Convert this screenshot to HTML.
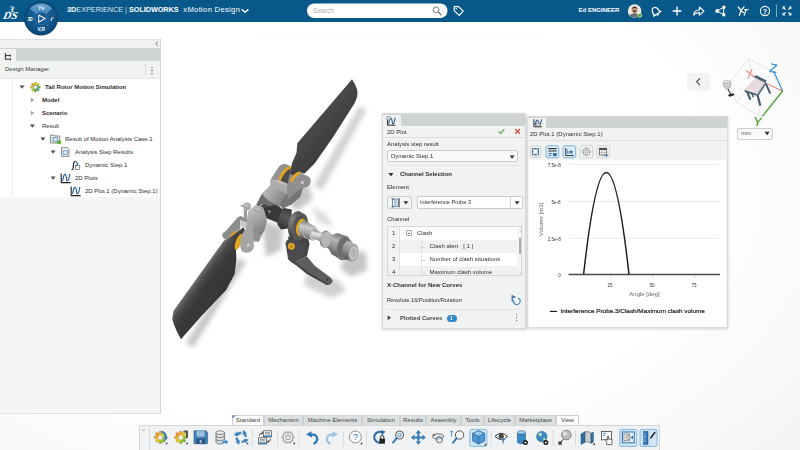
<!DOCTYPE html>
<html lang="en">
<head>
<meta charset="utf-8">
<title>3DEXPERIENCE | SOLIDWORKS xMotion Design</title>
<style>
html,body{margin:0;padding:0;}
body{width:800px;height:450px;overflow:hidden;position:relative;background:#fff;font-family:"Liberation Sans",Arial,sans-serif;font-size:7px;color:#3d3d3d;}
.abs{position:absolute;}
.t{position:absolute;white-space:nowrap;line-height:9px;height:9px;margin-top:-.7px;color:#2e2e2e;}
.b{font-weight:bold;}
#lp .t{margin-top:.9px;}
#bg{left:0;top:0;width:800px;height:450px;background:radial-gradient(ellipse 75% 85% at 42% 42%,#ffffff 0%,#ffffff 62%,#f4f5f6 100%);}
#topbar{left:0;top:0;width:800px;height:21.5px;background:#085889;}
#topbar .t{color:#fff;}
/* left panel */
#lp{left:0;top:38.500px;width:160px;height:374px;background:#f4f5f5;border-right:1px solid #d4d6d8;border-bottom:1px solid #dcdee0;}
#lp .hd{left:0;top:0;width:160px;height:9px;background:#f1f2f2;border-top:1px solid #dfe1e2;}
#lp .tabs{left:0;top:9px;width:160px;height:13px;background:#d2d5d6;}
#lp .tab{left:0;top:10px;width:16px;height:12px;background:#f1f2f2;}
#lp .title{left:0;top:22px;width:160px;height:17.500px;background:#f1f2f2;border-bottom:1px solid #e3e5e6;}
#lp .tree{left:0;top:40px;width:160px;height:118px;background:#fff;}
.arr-d{position:absolute;width:0;height:0;border-left:2.5px solid transparent;border-right:2.5px solid transparent;border-top:3.5px solid #4a4a4a;}
.arr-r{position:absolute;width:0;height:0;border-top:2.5px solid transparent;border-bottom:2.5px solid transparent;border-left:3.5px solid #9a9a9a;}
/* dialogs */
.dlg{background:#f1f2f2;border:1px solid #d9dbdc;box-shadow:0 1px 3px rgba(0,0,0,.18);}
.dtabs{left:0;top:0;height:12px;background:#ced2d3;}
.dtab{background:#f1f2f2;}
.sel{position:absolute;background:#fafafa;border:1px solid #c9cccd;border-radius:2px;box-sizing:border-box;}
.hr{position:absolute;height:1px;background:#e3e5e6;}
/* bottom */
#btabs .tb{position:absolute;top:0;height:10.6px;background:#dde0e1;border:1px solid #cdd0d1;border-bottom:none;box-sizing:border-box;text-align:center;line-height:9.6px;font-size:6px;color:#444;}
#btabs .tb.on{background:#fafafa;}
#tbar{left:139px;top:425.4px;width:521px;height:25px;background:#f1f2f3;border:1px solid #d4d6d8;border-bottom:none;box-sizing:border-box;}
</style>
</head>
<body>
<div id="bg" class="abs"></div>

<!-- ===== MODEL ===== -->
<svg id="model" class="abs" style="left:0;top:0" width="800" height="450" viewBox="0 0 800 450">
<defs>
  <filter id="blur6" x="-30%" y="-30%" width="160%" height="160%"><feGaussianBlur stdDeviation="5"/></filter>
  <filter id="blur3" x="-30%" y="-30%" width="160%" height="160%"><feGaussianBlur stdDeviation="2.5"/></filter>
  <filter id="soft" x="-5%" y="-5%" width="110%" height="110%"><feGaussianBlur stdDeviation=".5"/></filter>
  <linearGradient id="bladeU" x1="300" y1="110" x2="335" y2="140" gradientUnits="userSpaceOnUse"><stop offset="0" stop-color="#5e5e5e"/><stop offset=".25" stop-color="#4c4c4c"/><stop offset="1" stop-color="#3d3d3d"/></linearGradient>
  <linearGradient id="bladeL" x1="194" y1="282" x2="226" y2="305" gradientUnits="userSpaceOnUse"><stop offset="0" stop-color="#707070"/><stop offset=".14" stop-color="#4a4a4a"/><stop offset=".3" stop-color="#3a3a3a"/><stop offset="1" stop-color="#333"/></linearGradient>
  <linearGradient id="cylU" x1="266" y1="186" x2="284" y2="198" gradientUnits="userSpaceOnUse"><stop offset="0" stop-color="#bcbcbc"/><stop offset=".5" stop-color="#a4a4a4"/><stop offset="1" stop-color="#868686"/></linearGradient>
  <linearGradient id="cylL" x1="250" y1="210" x2="264" y2="232" gradientUnits="userSpaceOnUse"><stop offset="0" stop-color="#bdbdbd"/><stop offset=".5" stop-color="#a2a2a2"/><stop offset="1" stop-color="#7c7c7c"/></linearGradient>
  <linearGradient id="shaft" x1="320" y1="231" x2="316" y2="241" gradientUnits="userSpaceOnUse"><stop offset="0" stop-color="#9a9a9a"/><stop offset=".3" stop-color="#dedede"/><stop offset="1" stop-color="#7f7f7f"/></linearGradient>
  <linearGradient id="collar" x1="311" y1="225" x2="306" y2="240" gradientUnits="userSpaceOnUse"><stop offset="0" stop-color="#8a8a8a"/><stop offset=".35" stop-color="#c4c4c4"/><stop offset="1" stop-color="#777"/></linearGradient>
  <linearGradient id="hous" x1="350" y1="240" x2="341" y2="261" gradientUnits="userSpaceOnUse"><stop offset="0" stop-color="#7f7f7f"/><stop offset=".35" stop-color="#a4a4a4"/><stop offset="1" stop-color="#5c5c5c"/></linearGradient>
  <linearGradient id="hubc" x1="288" y1="209" x2="280" y2="228" gradientUnits="userSpaceOnUse"><stop offset="0" stop-color="#3c3c3c"/><stop offset=".4" stop-color="#5a5a5a"/><stop offset="1" stop-color="#333"/></linearGradient>
</defs>
<!-- shadows -->
<g opacity=".52" filter="url(#blur3)" fill="#909090">
  <path d="M366.500 109.500 L359.500 106 L314 185.500 L322 190.500 Z" opacity=".8"/>
  <path d="M288 187 L308 184 L313 199 L297 211 L286 201 Z"/>
  <path d="M312 206 L326 214 L334 228 L318 222 Z" opacity=".6"/>
  <path d="M262 220 L283 228 L281 250 L266 257 Z"/>
  <path d="M348 250 L366 252 L367 270 L351 277 L340 268 Z"/>
  <path d="M306 273 L338 280 L346 291 L331 298 L304 285 Z" opacity=".8"/>
  <path d="M246 262 L239 258 L186 343 L193 348 Z"/>
</g>
<g filter="url(#soft)">
<!-- upper blade -->
<path d="M352 79.300 Q356.800 86.500 357.500 92 Q357.800 97.500 355 102.500 L333.300 136.700 L315 163 L304.300 173.700 L299 172 L293.700 180.300 L287.700 181.700 L290 172.300 L292 163.300 L296.500 152.700 L297.300 143.300 Z" fill="url(#bladeU)"/>
<!-- lower blade -->
<path d="M241.700 228.700 L232.300 234.900 L223.700 241.100 L173.600 310.800 L172.300 318.500 Q173.500 326 181 339.200 L201.700 315.700 L226.100 290 L234.700 274.100 L236.400 259.400 L236 250 L238.500 241 L245 230 L243 227 Z" fill="url(#bladeL)"/>

<!-- LOWER GRIP -->
<path d="M247.200 218.900 L248.300 211.700 L255 205.500 L263.300 208.300 L266.700 213.300 L264.400 230.600 L258.900 241.700 L250.600 241.700 L244 236 L246.100 228.900 Z" fill="#a0a0a0"/>
<!-- back lug -->
<path d="M237.800 217.200 L240.600 216.100 L247.200 218.900 L246.700 222.800 L240 220 L240.500 229 L232.300 235.300 L227.500 239.500 A4.500 4.500 0 0 1 222.600 233.500 L226.700 230 Z" fill="#8e8e8e"/>
<path d="M229.600 235.600 Q232.500 232.600 236 230.800 L236.800 232.200 Q233.400 234 230.800 236.800 Z" fill="#dfa31d"/>
<!-- slot inner face -->
<path d="M240 220 L246.700 222.800 L246.100 228.900 L240.600 226.100 Z" fill="#c9c9c9"/>
<!-- body -->
<path d="M247.200 218.900 L248.300 211.700 L255 205.500 L263.300 208.300 L266.700 213.300 L266.700 221.700 L264.400 230.600 L258.900 236.100 L258.900 241.700 L253.300 238.300 L246.700 222.800 Z" fill="url(#cylL)"/>
<path d="M253.300 225.600 L258.900 228 L258.900 241.700 L253.300 238.300 Z" fill="#8f8f8f"/>
<!-- front lug -->
<ellipse cx="238.600" cy="242" rx="2.900" ry="8.400" transform="rotate(20 238.600 242)" fill="#e3a61e"/>
<path d="M246.700 222.800 L253.300 225.600 L253.300 238.300 L252.200 240.500 A7 7 0 0 1 241.200 250.400 Q238.400 243 242.500 233.600 L246.100 228.900 Z" fill="#a5a5a5"/>
<circle cx="248.300" cy="245" r="1.600" fill="#cfcfcf"/>
<!-- flybar balls -->
<path d="M243.800 210 h3.200 v8.600 h-3.200z" fill="#9c9c9c"/>
<circle cx="247" cy="206.400" r="3.900" fill="#ababab"/>
<circle cx="246.200" cy="205.400" r="1.800" fill="#bcbcbc"/>
<path d="M240.600 205.600 l3 .6" stroke="#777" stroke-width="1"/>
<path d="M250 207.800 L256 209" stroke="#c0c0c0" stroke-width=".8"/>
<ellipse cx="258.400" cy="209.700" rx="5" ry="3.200" transform="rotate(14 258.400 209.700)" fill="#a8a8a8"/>
<ellipse cx="257.800" cy="209" rx="3" ry="1.600" transform="rotate(14 257.800 209)" fill="#bdbdbd"/>
<!-- HUB -->
<path d="M262 193.700 L256 205 L258.700 206.500 L264 203 L273.300 208 L281 208 L277 202 Z" fill="#6c6c6c"/><path d="M264 203 L273.300 208 L266 209 L260 206.500 Z" fill="#4a4a4a"/>

<path d="M263.300 207.700 L274.700 205 L284 209.700 L280 223.700 L266.700 218.300 Z" fill="#393939"/>
<circle cx="269.400" cy="211.600" r="1.300" fill="#8c8c8c"/>
<path d="M282.700 207.700 L291.700 209.500 L291.700 228 L281 229.500 L277 224 Z" fill="url(#hubc)"/>

<!-- UPPER GRIP -->
<path d="M270.700 179.700 L277 169.700 L283.700 164.200 L290 166.300 L289 174 L295 175 L299 172.300 L304.300 175 L308 182 L303.500 186 L300 197 L291 204.500 L283 208.500 L279.500 205 L262 193.700 L270.700 185 Z" fill="#8c8c8c"/>
<!-- back lug -->
<path d="M270.700 179.700 L277 169.700 Q279 165 283.700 164.100 Q287.500 163.800 289.900 166.300 L286 172 L279 180.500 Z" fill="#929292"/>
<path d="M290.300 165.800 Q282 168.500 278.200 180 L280.800 181.200 Q284.800 171.500 291.400 168.600 Z" fill="#e2a51d"/>
<path d="M291 168.300 Q284.500 171 280.500 181 L287.700 183.700 L290 172.300 Z" fill="#4c4c4c"/>
<!-- box front + cylinder -->
<path d="M270.700 179.700 L287 186.300 L287 195 L279.500 205 Q268 203 262 193.700 L270.700 185 Z" fill="url(#cylU)"/>
<path d="M270.700 179.700 L287 186.300 L287 194.200 L270.700 185.400 Z" fill="#acacac"/><path d="M270.700 179.700 L278.700 180.100 L287.700 183.700 L287 186.300 Z" fill="#bdbdbd"/>

<!-- right lower dark -->
<path d="M287 193.700 L299 189.700 L303.500 186 L300 197 L291 204.500 L283 208.500 L279.500 205 Z" fill="#747474"/>
<!-- front lug -->
<path d="M287 186.300 L295 175 L299 172.300 L304.300 175 A5.800 5.800 0 0 1 304.800 187.500 L299 189.700 L288.300 199 L287 193.700 Z" fill="#8f8f8f"/>
<path d="M299.400 171.200 Q292.500 173.500 289.800 181.500 L292.500 182.600 Q294.800 176.400 300.900 173.800 Z" fill="#e2a51d"/>
<circle cx="302.300" cy="182.400" r="1.700" fill="#c8c8c8"/>
<circle cx="295.700" cy="183.600" r="1" fill="#a59a88"/>

<!-- LEVER -->
<path d="M287.500 236.500 L308 238 L309.500 244 L307 256 L303 258 L292 246 Z" fill="#434343"/>
<path d="M290.700 261.700 L296 265 L306.700 273.700 L326.700 285 L330.700 284.300 L332.900 281 L330.700 277.700 L314.700 265.700 L306.700 256.300 L304 257.700 L294.700 263 Z" fill="#5d5d5d"/>
<path d="M288 259 L290.700 261.700 L296 265 L306.700 273.700 L326.700 285 L329.500 284.800 L306.500 271 L296 262.600 L291.500 258.500 Z" fill="#444"/>
<path d="M286 246.300 A5.400 5.400 0 0 1 296 241.700 L306.700 243 L304 257.700 L294.700 263 L288 259 Z" fill="#4b4c4f"/>
<circle cx="291.300" cy="246.300" r="3.400" fill="#e6a81e"/>
<circle cx="291.300" cy="246.300" r="1.400" fill="#b07c14"/>
<circle cx="327.400" cy="279.700" r=".9" fill="#2a2a2a"/>
<defs><linearGradient id="gSl" x1="301.7" y1="212.8" x2="296.3" y2="240.2" gradientUnits="userSpaceOnUse"><stop offset="0" stop-color="#555"/><stop offset="0.3" stop-color="#828282"/><stop offset="0.6" stop-color="#676767"/><stop offset="1" stop-color="#3c3c3c"/></linearGradient><linearGradient id="gCo" x1="309.5" y1="223.0" x2="306.5" y2="238.7" gradientUnits="userSpaceOnUse"><stop offset="0" stop-color="#8c8c8c"/><stop offset="0.3" stop-color="#cfcfcf"/><stop offset="0.6" stop-color="#a8a8a8"/><stop offset="1" stop-color="#6e6e6e"/></linearGradient><linearGradient id="gSh" x1="319.7" y1="231.5" x2="317.9" y2="240.7" gradientUnits="userSpaceOnUse"><stop offset="0" stop-color="#a0a0a0"/><stop offset="0.3" stop-color="#e8e8e8"/><stop offset="0.6" stop-color="#c8c8c8"/><stop offset="1" stop-color="#808080"/></linearGradient><linearGradient id="gPu" x1="330.3" y1="232.5" x2="327.1" y2="249.2" gradientUnits="userSpaceOnUse"><stop offset="0" stop-color="#808080"/><stop offset="0.3" stop-color="#bfbfbf"/><stop offset="0.6" stop-color="#9c9c9c"/><stop offset="1" stop-color="#626262"/></linearGradient><linearGradient id="gHo" x1="341.8" y1="234.3" x2="337.2" y2="257.9" gradientUnits="userSpaceOnUse"><stop offset="0" stop-color="#727272"/><stop offset="0.28" stop-color="#b4b4b4"/><stop offset="0.6" stop-color="#909090"/><stop offset="1" stop-color="#525252"/></linearGradient></defs>
<!-- SLIDER -->
<ellipse cx="295.9" cy="225.0" rx="7.8" ry="14.0" transform="rotate(11.0 295.9 225.0)" fill="url(#gSl)"/>
<path d="M298.6 211.3 L302.8 213.3 L297.4 240.8 L293.3 238.8 Z" fill="url(#gSl)"/>
<ellipse cx="300.1" cy="227.0" rx="7.8" ry="14.0" transform="rotate(11.0 300.1 227.0)" fill="#5e5e5e"/>
<ellipse cx="300.2" cy="227.1" rx="6.7" ry="12.0" transform="rotate(11.0 300.2 227.1)" fill="#545454"/>
<ellipse cx="301.2" cy="227.5" rx="5.0" ry="8.9" transform="rotate(11.0 301.2 227.5)" fill="#e6a81e"/>
<ellipse cx="301.9" cy="227.9" rx="3.6" ry="6.4" transform="rotate(11.0 301.9 227.9)" fill="#8c8c8c"/>
<!-- collar + shaft -->
<ellipse cx="303.1" cy="228.5" rx="4.5" ry="8.0" transform="rotate(11.0 303.1 228.5)" fill="url(#gCo)"/>
<path d="M304.6 220.6 L309.5 223.0 L306.5 238.7 L301.5 236.3 Z" fill="url(#gCo)"/>
<ellipse cx="308.0" cy="230.9" rx="4.5" ry="8.0" transform="rotate(11.0 308.0 230.9)" fill="#b9b9b9"/>
<ellipse cx="308.0" cy="230.9" rx="4.0" ry="7.2" transform="rotate(11.0 308.0 230.9)" fill="url(#gCo)"/>
<path d="M309.4 223.8 L315.2 226.6 L312.5 240.7 L306.6 237.9 Z" fill="url(#gCo)"/>
<ellipse cx="313.9" cy="233.7" rx="4.0" ry="7.2" transform="rotate(11.0 313.9 233.7)" fill="#c3c3c3"/>
<ellipse cx="313.9" cy="233.7" rx="2.5" ry="4.5" transform="rotate(11.0 313.9 233.7)" fill="url(#gSh)"/>
<path d="M314.7 229.3 L326.9 235.1 L325.2 244.0 L313.0 238.1 Z" fill="url(#gSh)"/>
<ellipse cx="326.0" cy="239.6" rx="2.5" ry="4.5" transform="rotate(11.0 326.0 239.6)" fill="url(#gSh)"/>
<!-- pulley -->
<ellipse cx="333.2" cy="243.0" rx="4.9" ry="8.8" transform="rotate(11.0 333.2 243.0)" fill="url(#gPu)"/>
<path d="M334.9 234.4 L336.5 235.2 L333.2 252.5 L331.5 251.7 Z" fill="url(#gPu)"/>
<ellipse cx="334.8" cy="243.8" rx="4.9" ry="8.8" transform="rotate(11.0 334.8 243.8)" fill="#9a9a9a"/>
<ellipse cx="326.5" cy="239.8" rx="4.1" ry="7.3" transform="rotate(11.0 326.5 239.8)" fill="url(#gPu)"/>
<path d="M327.9 232.6 L335.1 236.1 L332.3 250.4 L325.1 246.9 Z" fill="url(#gPu)"/>
<ellipse cx="333.7" cy="243.3" rx="4.1" ry="7.3" transform="rotate(11.0 333.7 243.3)" fill="#8a8a8a"/>
<path d="M326.4 245.3 L332.2 248.1" stroke="#6a6a6a" stroke-width=".7"/>
<path d="M326.9 242.8 L332.7 245.6" stroke="#6a6a6a" stroke-width=".7"/>
<path d="M327.4 240.2 L333.2 243.0" stroke="#6a6a6a" stroke-width=".7"/>
<path d="M327.9 237.7 L333.7 240.5" stroke="#6a6a6a" stroke-width=".7"/>
<path d="M328.4 235.1 L334.2 237.9" stroke="#6a6a6a" stroke-width=".7"/>
<ellipse cx="324.7" cy="238.9" rx="4.8" ry="8.5" transform="rotate(11.0 324.7 238.9)" fill="url(#gPu)"/>
<path d="M326.4 230.6 L328.0 231.4 L324.7 248.1 L323.1 247.3 Z" fill="url(#gPu)"/>
<ellipse cx="326.4" cy="239.7" rx="4.8" ry="8.5" transform="rotate(11.0 326.4 239.7)" fill="#b6b6b6"/>
<!-- housing -->
<ellipse cx="335.9" cy="244.3" rx="6.3" ry="11.2" transform="rotate(11.0 335.9 244.3)" fill="url(#gHo)"/>
<path d="M338.1 233.4 L345.9 235.9 L341.2 260.2 L333.8 255.3 Z" fill="url(#gHo)"/>
<ellipse cx="343.6" cy="248.0" rx="6.9" ry="12.4" transform="rotate(11.0 343.6 248.0)" fill="#7c7c7c"/>
<ellipse cx="343.6" cy="248.0" rx="5.8" ry="10.4" transform="rotate(11.0 343.6 248.0)" fill="#6a6a6a"/>
<path d="M345.6 237.8 L349.2 239.6 L345.2 260.0 L341.6 258.3 Z" fill="#6a6a6a"/>
<ellipse cx="347.2" cy="249.8" rx="5.8" ry="10.4" transform="rotate(11.0 347.2 249.8)" fill="#777"/>
<ellipse cx="347.2" cy="249.8" rx="5.0" ry="8.9" transform="rotate(11.0 347.2 249.8)" fill="url(#gHo)"/>
<path d="M348.9 241.0 L355.1 244.1 L351.7 261.5 L345.5 258.5 Z" fill="url(#gHo)"/>
<ellipse cx="353.4" cy="252.8" rx="5.0" ry="8.9" transform="rotate(11.0 353.4 252.8)" fill="#a6a6a6"/>
<ellipse cx="353.6" cy="252.9" rx="3.7" ry="6.6" transform="rotate(11.0 353.6 252.9)" fill="#cbcbcb"/>
<ellipse cx="353.6" cy="252.9" rx="2.7" ry="4.8" transform="rotate(11.0 353.6 252.9)" fill="#b2b2b2"/>
</g>
</svg>

<div class="abs" style="left:260px;top:37.800px;width:280px;height:1.500px;background:#f8f8f8"></div>
<!-- ===== TOP BAR ===== -->
<div id="topbar" class="abs">
<svg class="abs" style="left:0;top:0;overflow:visible" width="800" height="40" viewBox="0 0 800 40">
  <defs>
    <radialGradient id="cg" cx="50%" cy="40%" r="60%"><stop offset="0" stop-color="#1f6ba3"/><stop offset="1" stop-color="#0b4a7a"/></radialGradient>
    <linearGradient id="cq" x1="0" y1="0" x2="0" y2="1"><stop offset="0" stop-color="#6aa6d0"/><stop offset="1" stop-color="#3a80b4"/></linearGradient>
  </defs>
  <!-- compass -->
  <circle cx="41" cy="18.500" r="17" fill="#0a4573"/>
  <circle cx="41" cy="18.500" r="15.600" fill="url(#cg)"/>
  <path d="M29.800 8.400 A15.200 15.200 0 0 1 52.200 8.400 L45.200 14.800 A6 6 0 0 0 36.800 14.800 Z" fill="url(#cq)"/>
  <path d="M33 10.500 L36 13.500 M49 10.500 L46 13.500 M33 26.500 L35.600 24 M49 26.500 L46.400 24" stroke="#4b94c8" stroke-width=".5" fill="none"/>
  <circle cx="41" cy="18.500" r="6.200" fill="#14598f" stroke="#2b78b2" stroke-width=".7"/>
  <path d="M38.700 15 L45.200 18.600 L38.700 22.200 Z" fill="none" stroke="#e9f1f7" stroke-width="1.100" stroke-linejoin="round"/>
  <text x="41.200" y="10.400" font-size="5.200" font-weight="bold" font-style="italic" fill="#fff" text-anchor="middle">Ys</text>
  <text x="30.200" y="20.500" font-size="4.800" font-weight="bold" fill="#fff" text-anchor="middle" textLength="5" lengthAdjust="spacingAndGlyphs">3D</text>
  <text x="52" y="20.700" font-size="5.600" font-weight="bold" font-style="italic" fill="#fff" text-anchor="middle">i'</text>
  <text x="41.200" y="30.800" font-size="4.800" font-weight="bold" fill="#fff" text-anchor="middle" textLength="7.500" lengthAdjust="spacingAndGlyphs">V,R</text>
  <!-- 3DS logo -->
  <g font-family="Liberation Serif, serif" font-weight="bold" font-style="italic" fill="#fff">
    <text x="9.400" y="12.600" font-size="9.500" transform="rotate(8 12 8)">3</text>
    <text x="3" y="18.900" font-size="10.500" textLength="14.500" lengthAdjust="spacingAndGlyphs" transform="skewX(-12) translate(3.500 0)">DS</text>
  </g>
  <!-- search -->
  <rect x="307" y="3.5" width="140.5" height="14.5" rx="7.2" fill="#fff"/>
  <text x="313" y="13.2" font-size="6.6" fill="#a9b0b5">Search</text>
  <circle cx="436.2" cy="9.8" r="2.9" fill="none" stroke="#6b747a" stroke-width=".9"/>
  <path d="M438.3 12 L441.2 15" stroke="#6b747a" stroke-width="1.1" stroke-linecap="round"/>
  <!-- tag -->
  <path d="M454.2 6.6 L458.6 6.6 L463.2 11.2 L459.2 15.4 L454.2 10.6 Z" fill="none" stroke="#fff" stroke-width="1.2" stroke-linejoin="round"/>
  <circle cx="456.3" cy="8.7" r=".8" fill="#fff"/>
  <!-- avatar -->
  <circle cx="634.600" cy="11" r="6.800" fill="#ebe6de"/>
  <circle cx="634.600" cy="9.600" r="3" fill="#c79a7a"/>
  <path d="M631.400 9 Q634.600 4 637.800 9 Q634.600 7.200 631.400 9Z" fill="#3b2a20"/>
  <path d="M632.600 11.400 Q634.600 13.600 636.600 11.400 L636.200 10.400 H633z" fill="#4a362a"/>
  <path d="M629.200 15.400 Q634.600 10.400 640 15.400 Q634.600 19.400 629.200 15.400Z" fill="#6d7478"/>
  <circle cx="639.800" cy="15.400" r="2" fill="#57a83a" stroke="#fff" stroke-width=".5"/>
  <!-- bell/notify -->
  <g transform="translate(655.400 10.800) rotate(-32)" fill="none" stroke="#fff" stroke-width="1.200" stroke-linejoin="round">
    <path d="M-3.300 2.400 Q-3.400 -3.600 0 -3.600 Q3.400 -3.600 3.300 2.400 L4.300 3.600 H-4.300 Z"/>
    <path d="M-1 4.400 Q0 5.600 1 4.400" stroke-width="1"/>
  </g>
  <!-- plus -->
  <path d="M677 6.6 V15.4 M672.6 11 H681.4" stroke="#fff" stroke-width="1.3"/>
  <!-- share arrow -->
  <path d="M693.6 15.2 Q694 10.2 699.4 10 L699.4 7 L704 11.2 L699.4 15.2 L699.4 12.6 Q696 12.4 693.6 15.2Z" fill="none" stroke="#fff" stroke-width="1.1" stroke-linejoin="round"/>
  <!-- network share -->
  <path d="M717.2 11 L723.6 7.2 M717.2 11 L723.6 14.8 M723.6 7.2 L723.6 14.8" stroke="#fff" stroke-width="1"/>
  <circle cx="717.2" cy="11" r="1.9" fill="#fff"/><circle cx="723.8" cy="7.2" r="1.7" fill="#fff"/><circle cx="723.8" cy="14.8" r="1.7" fill="#fff"/>
  <!-- collab -->
  <path d="M738.2 7 L741 10.4 L744 7 M741 10.4 L739.4 15.4 M741 11 L743.4 12.6" stroke="#fff" stroke-width="1.2" fill="none" stroke-linecap="round"/>
  <path d="M744.6 9.6 L748 9.6 M744.2 15.2 L746 10 " stroke="#fff" stroke-width="1.1" fill="none" stroke-linecap="round"/>
  <!-- help -->
  <circle cx="765" cy="11" r="4.6" fill="none" stroke="#fff" stroke-width="1.1"/>
  <text x="765" y="13.6" font-size="7" font-weight="bold" fill="#fff" text-anchor="middle">?</text>
  <!-- sep -->
  <path d="M776.5 4.5 V17" stroke="#9fc0d6" stroke-width=".8"/>
  <!-- expand -->
  <path d="M782.6 6.6 h2.8 l-1 1 l1.6 1.6 l-.8 .8 l-1.6 -1.6 l-1 1z M791.4 6.6 v2.8 l-1 -1 l-1.6 1.6 l-.8 -.8 l1.6 -1.6 l-1 -1z M782.6 15.4 v-2.8 l1 1 l1.6 -1.6 l.8 .8 l-1.6 1.6 l1 1z M791.4 15.4 h-2.8 l1 -1 l-1.6 -1.6 l.8 -.8 l1.6 1.6 l1 -1z" fill="#fff"/>
  <!-- chevron -->
  <path d="M241.6 9.4 L245 12.2 L248.4 9.4" stroke="#fff" stroke-width="1.4" fill="none"/>
</svg>
<div class="t" style="left:67px;top:6px;font-size:7.3px;"><span class="b">3D</span><span style="letter-spacing:-.03px;color:#dce9f2">EXPERIENCE</span><span style="color:#cfe0ec"> | </span><span class="b" style="letter-spacing:-.08px">SOLIDWORKS</span><span style="font-size:7.6px;letter-spacing:.32px">&nbsp; xMotion Design</span></div>
<div class="t b" style="left:578.500px;top:6.600px;font-size:6.050px;">Ed ENGINEER</div>

</div>

<!-- ===== LEFT PANEL ===== -->
<div id="lp" class="abs">
<div class="abs hd"></div>
<div class="abs tabs"></div>
<div class="abs tab"></div>
<div class="abs title"></div>
<div class="abs tree"></div>
<svg class="abs" style="left:0;top:0;overflow:visible" width="160" height="160" viewBox="0 39 160 160">
  <defs><linearGradient id="rain2" x1="0" y1="0" x2="1" y2="1"><stop offset="0" stop-color="#e2412c"/><stop offset=".25" stop-color="#f0a61c"/><stop offset=".42" stop-color="#e8d820"/><stop offset=".62" stop-color="#5fbf3a"/><stop offset="1" stop-color="#2f7fd0"/></linearGradient></defs>
  <!-- collapse chevron -->
  <path d="M157.800 41.400 L155.800 43.600 L157.800 45.800" stroke="#6d7174" stroke-width="1" fill="none"/>
  <!-- tree tab icon -->
  <path d="M5.4 53 V59.6 M5.4 55.6 H10.4 M5.4 59.2 H10.4 M10.4 54.6 V56.6 M10.4 58.2 V60.2" stroke="#2f2f2f" stroke-width="1" fill="none"/>
  <!-- title sep and dots -->
  <path d="M145.600 64 V75.500" stroke="#dcdedf" stroke-width="1"/>
  <circle cx="152" cy="67.800" r=".75" fill="#666"/><circle cx="152" cy="70.800" r=".75" fill="#666"/><circle cx="152" cy="73.800" r=".75" fill="#666"/>
  <!-- guide line -->
  <path d="M12.5 79 V197" stroke="#ededed" stroke-width="1"/>
  <!-- arrows -->
  <g fill="#4d4d4d">
    <path d="M19.6 85.4 h5 l-2.5 3.4z"/>
    <path d="M29.8 124.4 h5 l-2.5 3.4z"/>
    <path d="M40.4 137.4 h5 l-2.5 3.4z"/>
    <path d="M50.6 150.4 h5 l-2.5 3.4z"/>
    <path d="M50.6 176.4 h5 l-2.5 3.4z"/>
  </g>
  <g fill="#a4a7a9">
    <path d="M30.8 97.6 v5 l3.4 -2.5z"/>
    <path d="M30.8 110.6 v5 l3.4 -2.5z"/>
  </g>
  <!-- gear icon (root) -->
  <g transform="translate(35.400 87.200) scale(.8)">
    <path d="M4.45 -1.18 L6.12 -1.02 L6.12 1.02 L4.45 1.18 L3.98 2.31 L5.04 3.60 L3.60 5.04 L2.31 3.98 L1.18 4.45 L1.02 6.12 L-1.02 6.12 L-1.18 4.45 L-2.31 3.98 L-3.60 5.04 L-5.04 3.60 L-3.98 2.31 L-4.45 1.18 L-6.12 1.02 L-6.12 -1.02 L-4.45 -1.18 L-3.98 -2.31 L-5.04 -3.60 L-3.60 -5.04 L-2.31 -3.98 L-1.18 -4.45 L-1.02 -6.12 L1.02 -6.12 L1.18 -4.45 L2.31 -3.98 L3.60 -5.04 L5.04 -3.60 L3.98 -2.31 Z" fill="url(#rain2)" stroke="#8a6a20" stroke-width=".35"/>
    <circle r="2.500" fill="#fff" stroke="#3c7fbd" stroke-width=".9"/>
  </g>
  <!-- result case folder icon -->
  <g>
    <path d="M50.6 135 h3 l.8 1 h5.4 v7 h-9.2z" fill="#f2f3f3" stroke="#555" stroke-width=".7"/>
    <rect x="53" y="137.6" width="4.6" height="3.6" fill="#dbe8f4" stroke="#2d6ea8" stroke-width=".6"/>
    <circle cx="59.2" cy="142.2" r="2" fill="#5cb030"/>
  </g>
  <!-- analysis step results icon -->
  <g>
    <path d="M61.6 147.6 h5.6 l1.8 1.8 v7 h-7.4z" fill="#fafafa" stroke="#555" stroke-width=".7"/>
    <rect x="63.2" y="150.8" width="4.2" height="3.6" fill="#dbe8f4" stroke="#2d6ea8" stroke-width=".6"/>
  </g>
  <!-- dynamic step icon -->
  <g>
    <path d="M71.600 169.800 Q73.400 169.800 73.400 165.600 T75.600 161" stroke="#222" stroke-width="1.200" fill="none"/>
    <path d="M75.600 161.600 L77.800 163.600 L76.400 166 L79.600 167.400" stroke="#1f5a92" stroke-width="1.100" fill="none"/>
    <rect x="75.6" y="165.4" width="4.2" height="4" fill="#e8f0f8" stroke="#555" stroke-width=".6"/>
  </g>
  <!-- 2D plots icons -->
  <g id="pl2d">
    <path d="M61.200 173.400 V182.600 H70.600" stroke="#222" stroke-width="1.100" fill="none"/>
    <path d="M62.600 181 Q63.600 174 65.100 174.400 Q66.400 174.800 66.800 181" stroke="#1f5a92" stroke-width="1.100" fill="none"/>
    <path d="M66.800 181 Q68.800 181 69.200 177 Q69.500 174 70.400 174.400" stroke="#1f5a92" stroke-width="1.100" fill="none"/>
  </g>
  <use href="#pl2d" x="10" y="13"/>
</svg>
<div class="t" style="left:5px;top:26px;font-size:6px;color:#3a3a3a">Design Manager</div>
<div class="t b" style="left:45px;top:43.5px;font-size:6px;">Tail Rotor Motion Simulation</div>
<div class="t b" style="left:42px;top:56.5px;font-size:6px;">Model</div>
<div class="t b" style="left:42px;top:69.5px;font-size:6px;">Scenario</div>
<div class="t" style="left:42px;top:82.5px;font-size:6px;">Result</div>
<div class="t" style="left:65px;top:95.5px;font-size:6px;">Result of Motion Analysis Case.1</div>
<div class="t" style="left:75px;top:108.5px;font-size:6px;">Analysis Step Results</div>
<div class="t" style="left:85px;top:121.5px;font-size:6px;">Dynamic Step.1</div>
<div class="t" style="left:75px;top:134.5px;font-size:6px;">2D Plots</div>
<div class="t" style="left:85px;top:147.5px;font-size:6px;">2D Plot.1 (Dynamic Step.1)</div>

</div>

<!-- ===== DIALOG 2D PLOT ===== -->
<div class="abs dlg" style="left:382px;top:113px;width:142px;height:214px;">
  <div class="abs dtabs" style="width:142px;height:11.800px"></div>
  <div class="abs dtab" style="left:0;top:1px;width:18px;height:10.800px;"></div>
  <div class="hr" style="left:0;top:23.300px;width:142px;background:#dcdfe0"></div>
  <div class="t" style="left:4px;top:14.5px;font-size:6px;">2D Plot</div>
  <div class="t" style="left:4px;top:26.200px;font-size:6px;">Analysis step result</div>
  <div class="sel" style="left:4px;top:36.400px;width:131px;height:11.600px;"></div>
  <div class="t" style="left:8px;top:38.600px;font-size:6px;">Dynamic Step.1</div>
  <div class="hr" style="left:4px;top:51.200px;width:134px;"></div>
  <div class="t b" style="left:17px;top:56.5px;font-size:6px;">Channel Selection</div>
  <div class="t" style="left:4px;top:70px;font-size:6px;">Element</div>
  <div class="sel" style="left:4px;top:82.400px;width:24.500px;height:12.500px;background:#f3f4f4"></div>
  <div class="sel" style="left:34px;top:82.400px;width:106px;height:12.500px;background:#fff;border-radius:1px"></div>
  <div class="abs" style="left:127px;top:83.400px;width:1px;height:10.500px;background:#cfd2d3"></div>
  <div class="t" style="left:37px;top:84.800px;font-size:5.600px;">Interference Probe.3</div>
  <div class="t" style="left:4px;top:101.200px;font-size:6px;">Channel</div>
  <!-- table -->
  <div class="abs" style="left:4px;top:112px;width:135px;height:50px;background:#fff;border:1px solid #d4d7d8;box-sizing:border-box;overflow:hidden">
    <div class="abs" style="left:0;top:13px;width:135px;height:13px;background:#f0f1f2"></div>
    <div class="abs" style="left:0;top:39px;width:135px;height:13px;background:#f0f1f2"></div>
    <div class="abs" style="left:0;top:0;width:11px;height:50px;background:rgba(240,241,242,.7);border-right:1px solid #e0e2e3"></div><div class="abs" style="left:32.500px;top:13px;width:.7px;height:37px;background:#e2e2e2"></div>
    <div class="t" style="left:4px;top:2.5px;font-size:6px;">1</div>
    <div class="t" style="left:4px;top:15.5px;font-size:6px;">2</div>
    <div class="t" style="left:4px;top:28.5px;font-size:6px;">3</div>
    <div class="t" style="left:4px;top:41.5px;font-size:6px;">4</div>
    <div class="abs" style="left:17.800px;top:3px;width:6.400px;height:6.400px;border:.6px solid #a5a8aa;border-radius:1px;background:#fff;box-sizing:border-box"></div>
    <div class="abs" style="left:19.800px;top:5.900px;width:2.400px;height:.7px;background:#666"></div>
    <div class="t" style="left:29px;top:2.5px;font-size:6px;">Clash</div>
    <div class="t" style="left:41.5px;top:15.5px;font-size:6px;">Clash alert &nbsp;&nbsp;[ 1 ]</div>
    <div class="t" style="left:41.5px;top:28.5px;font-size:6px;">Number of clash situations</div>
    <div class="t" style="left:41.5px;top:41.5px;font-size:6px;">Maximum clash volume</div>
    <div class="abs" style="left:33px;top:19.500px;width:4px;height:.6px;background:#d0d0d0"></div>
    <div class="abs" style="left:33px;top:32.500px;width:4px;height:.6px;background:#d0d0d0"></div>
    <div class="abs" style="left:33px;top:45.500px;width:4px;height:.6px;background:#d0d0d0"></div>
    <div class="abs" style="left:129px;top:0;width:5px;height:50px;background:#f5f5f5"></div>
    <div class="abs" style="left:130.5px;top:11px;width:2.6px;height:16px;background:#a9acad"></div>
  </div>
  <div class="t b" style="left:4px;top:167.5px;font-size:6px;">X-Channel for New Curves</div>
  <div class="t" style="left:4px;top:182.300px;font-size:5.700px;">Revolute.16/Position/Rotation</div>
  <div class="hr" style="left:4px;top:194.800px;width:134px;"></div>
  <div class="t b" style="left:17px;top:200.300px;font-size:6px;color:#444">Plotted Curves</div>
  <div class="abs" style="left:63.500px;top:200.700px;width:10px;height:7.400px;border-radius:4px;background:#2f87c8;"></div>
  <div class="t b" style="left:66.800px;top:200.200px;font-size:5.600px;color:#fff">1</div>
  <svg class="abs" style="left:0;top:0;overflow:visible" width="142" height="214" viewBox="382 113 142 214">
    <!-- tab icon -->
    <g transform="translate(-61.500 -47) scale(.95)">
      <path d="M471.6 172.2 V180.2 H480" stroke="#222" stroke-width="1" fill="none"/>
      <path d="M472.800 179 Q473.800 172.600 475.200 173 Q476.400 173.400 476.800 179" stroke="#1f5a92" stroke-width="1.100" fill="none"/>
      <path d="M476.800 179 Q478.600 179 479 175 Q479.300 172.600 480.200 173" stroke="#1f5a92" stroke-width="1.100" fill="none"/>
      <rect x="471" y="171.4" width="3.2" height="3.2" fill="#fff" stroke="#555" stroke-width=".6"/>
    </g>
    <!-- check and cross -->
    <path d="M497.600 130.400 L499.600 132.400 L503.400 128.200" stroke="#4caf3c" stroke-width="1.1" fill="none"/>
    <path d="M514.200 128 L518.800 132.800 M518.800 128 L514.200 132.800" stroke="#e03a2e" stroke-width="1.1" fill="none"/>
    <!-- dropdown arrows -->
    <path d="M508.600 154.600 h5 l-2.500 3.200z" fill="#333"/>
    <path d="M513.600 200.200 h5 l-2.500 3.200z" fill="#333"/>
    <path d="M402.400 200.200 h5 l-2.500 3.200z" fill="#333"/>
    <path d="M387.400 172 h5 l-2.500 3.400z" fill="#333"/>
    <path d="M386.600 314.300 v5 l3.400 -2.500z" fill="#444"/>
    <!-- element icon -->
    <g transform="translate(0 -.7)">
      <rect x="391.6" y="198.8" width="6" height="7.6" fill="#e9eff5" stroke="#44698c" stroke-width=".7"/>
      <path d="M393 200.6 h3.2 M393 202.6 h3.2 M393 204.6 h3.2" stroke="#2d6ea8" stroke-width=".6"/>
      <path d="M398.2 198 v9" stroke="#333" stroke-width=".8"/>
      <path d="M390.4 198.4 h2.4 M390.4 206.8 h2.4" stroke="#333" stroke-width=".6"/>
    </g>
    <!-- scrollbar arrows -->
    <path d="M518.6 231.4 l1.4 -1.6 l1.4 1.6" stroke="#aaa" stroke-width=".5" fill="none"/>
    <path d="M518.6 271.6 l1.4 1.6 l1.4 -1.6" stroke="#aaa" stroke-width=".5" fill="none"/>
    <!-- revolute icon -->
    <g transform="translate(-.8 -2.500)">
      <path d="M512 296.4 v6" stroke="#1e5f96" stroke-width="1.1"/>
      <path d="M513 297 l3 1.4 l-3 1.4z" fill="#1e5f96"/>
      <path d="M518 299.6 A3.4 3.4 0 1 1 513.2 302.6" stroke="#3a86c4" stroke-width="1.1" fill="none"/>
      <path d="M511.6 302.2 l2.6 -.6 l-.6 2.6z" fill="#3a86c4"/>
    </g>
    <!-- dots -->
    <circle cx="515.600" cy="313.800" r=".65" fill="#666"/><circle cx="515.600" cy="316.600" r=".65" fill="#666"/><circle cx="515.600" cy="319.400" r=".65" fill="#666"/>
  </svg>
</div>


<!-- ===== PLOT PANEL ===== -->
<div class="abs dlg" style="left:526.500px;top:116px;width:199.500px;height:210px;">
  <div class="abs dtabs" style="width:199.500px;height:11.200px"></div>
  <div class="abs dtab" style="left:0;top:1px;width:18px;height:10.200px;"></div>
  <div class="hr" style="left:0;top:22.500px;width:199.500px;background:#dcdfe0"></div>
  <div class="t" style="left:2.5px;top:14px;font-size:6px;">2D Plot.1 (Dynamic Step.1)</div>
  <div class="abs" style="left:1.500px;top:43px;width:196.500px;height:166.500px;background:#fff"></div>
  <svg class="abs" style="left:0;top:0;overflow:visible" width="199" height="210" viewBox="527.500 117 199 210">
    <!-- tab icon -->
    <g transform="translate(85.400 -44.400) scale(.95)">
      <path d="M471.6 172.2 V180.2 H480" stroke="#222" stroke-width="1" fill="none"/>
      <path d="M472.800 179 Q473.800 172.600 475.200 173 Q476.400 173.400 476.800 179" stroke="#1f5a92" stroke-width="1.100" fill="none"/>
      <path d="M476.800 179 Q478.600 179 479 175 Q479.300 172.600 480.200 173" stroke="#1f5a92" stroke-width="1.100" fill="none"/>
      <rect x="474.6" y="176.4" width="3.4" height="3" fill="#fff" stroke="#555" stroke-width=".6"/>
    </g>
    <!-- toolbar buttons -->
    <g transform="translate(-.8 0)">
      <rect x="530.4" y="146" width="10.6" height="11.4" rx="1.5" fill="#f3f4f4" stroke="#c3c6c8" stroke-width=".7"/>
      <rect x="546.4" y="145.8" width="12.6" height="12" rx="2" fill="#dfeefa" stroke="#5f9fd4" stroke-width=".8"/>
      <rect x="563.4" y="145.8" width="12.6" height="12" rx="2" fill="#dfeefa" stroke="#5f9fd4" stroke-width=".8"/>
      <rect x="580.4" y="145.8" width="12.6" height="12" rx="2" fill="#f3f4f4" stroke="#c3c6c8" stroke-width=".7"/>
      <rect x="597.2" y="145.8" width="12.6" height="12" rx="2" fill="#f3f4f4" stroke="#c3c6c8" stroke-width=".7"/>
      <!-- fit icon -->
      <rect x="532.200" y="148" width="7" height="7.400" fill="#3f6d96"/><rect x="533.600" y="149.600" width="4.200" height="4.200" rx="1.400" fill="#fff"/>
      <path d="M533 148.8 h2 l-2 2z M538.4 148.8 v2 l-2 -2z M533 154.6 v-2 l2 2z M538.4 154.6 h-2 l2 -2z" fill="#fff"/>
      <path d="M534.4 150.2 l2.6 3 M537 150.2 l-2.6 3" stroke="#fff" stroke-width=".6"/>
      <!-- legend icon -->
      <path d="M548.6 148.6 h8.4 M548.6 151 h8.4" stroke="#333" stroke-width="1.1"/>
      <path d="M548.6 153.6 h4 M548.6 155.6 h3" stroke="#2d6ea8" stroke-width=".9"/>
      <path d="M553.4 153 h3.6 v3.2 h-3.6z" fill="#2d6ea8"/>
      <!-- axis icon -->
      <path d="M566 148 V155.6 H574" stroke="#333" stroke-width="1" fill="none"/>
      <path d="M567.6 149 v5 M569.4 151 v3" stroke="#2d6ea8" stroke-width=".8"/>
      <path d="M570.4 150 l3.4 2 l-1.6 .4 l1 1.8 l-.8 .4 l-1 -1.8 l-1 1z" fill="#2d6ea8"/>
      <!-- gear -->
      <g transform="translate(586.700 151.800)"><path d="M2.80 -0.74 L3.85 -0.64 L3.85 0.64 L2.80 0.74 L2.51 1.46 L3.17 2.27 L2.27 3.17 L1.46 2.51 L0.74 2.80 L0.64 3.85 L-0.64 3.85 L-0.74 2.80 L-1.46 2.51 L-2.27 3.17 L-3.17 2.27 L-2.51 1.46 L-2.80 0.74 L-3.85 0.64 L-3.85 -0.64 L-2.80 -0.74 L-2.51 -1.46 L-3.17 -2.27 L-2.27 -3.17 L-1.46 -2.51 L-0.74 -2.80 L-0.64 -3.85 L0.64 -3.85 L0.74 -2.80 L1.46 -2.51 L2.27 -3.17 L3.17 -2.27 L2.51 -1.46 Z" fill="#fbfbfb" stroke="#666" stroke-width=".6"/><circle r="1.500" fill="none" stroke="#666" stroke-width=".6"/></g>
      <!-- table -->
      <rect x="599.6" y="148.2" width="7.4" height="6.8" fill="#fff" stroke="#444" stroke-width=".7"/>
      <rect x="599.6" y="148.2" width="7.4" height="1.8" fill="#444"/>
      <path d="M602 150 v5 M604.6 150 v5 M599.6 152.4 h7.4" stroke="#777" stroke-width=".45"/>
      <path d="M604 155.4 h3.8 M606.4 153.8 l1.6 1.6 l-1.6 1.6" stroke="#2d6ea8" stroke-width=".8" fill="none"/>
    </g>
    <!-- grid -->
    <path d="M568 164.3 H719.4 M568 201.4 H719.4 M568 238.3 H719.4" stroke="#e9e9e9" stroke-width=".9"/>
    <path d="M568 274.5 H719.6" stroke="#4a4a4a" stroke-width="1.5"/>
    <path d="M610.3 275 v3 M652.3 275 v3 M694.2 275 v3" stroke="#bdbdbd" stroke-width=".7"/>
    <path d="M583.1 274.4 Q605.8 70.6 628.5 274.4" stroke="#1c1c1c" stroke-width="1.450" fill="none" stroke-linejoin="round"/>
    <g font-size="4.600" fill="#333" text-anchor="end">
      <text x="560.200" y="166.800">7.5e-8</text>
      <text x="560.200" y="204">5e-8</text>
      <text x="560.200" y="240.900">2.5e-8</text>
      <text x="560.200" y="277.400">0</text>
    </g>
    <g font-size="4.600" fill="#333" text-anchor="middle">
      <text x="609.600" y="287.200">25</text>
      <text x="651.600" y="287.200">50</text>
      <text x="693.600" y="287.200">75</text>
    </g>
    <text x="644" y="295.700" font-size="6" fill="#666" text-anchor="middle">Angle [deg]</text>
    <text transform="translate(542.400 219.500) rotate(-90)" font-size="6" fill="#666" text-anchor="middle">Volume [m3]</text>
    <path d="M549.4 311.4 H556.6" stroke="#222" stroke-width="1.2"/>
    <text x="560" y="312.900" font-size="6.200" fill="#2a2a2a" stroke="#2a2a2a" stroke-width=".22" textLength="144.400" lengthAdjust="spacingAndGlyphs">Interference Probe.3/Clash/Maximum clash volume</text>
  </svg>
</div>


<!-- ===== COMPASS / VIEW CUBE ===== -->
<div class="abs" style="left:687px;top:73px;width:23px;height:17.5px;background:#f3f3f3;border-radius:1.5px"></div>
<div class="sel" style="left:737px;top:128px;width:36px;height:11.5px;background:#fbfbfb"></div>
<div class="t" style="left:741px;top:129.6px;font-size:6px;color:#555">mm</div>
<svg class="abs" style="left:680px;top:50px;overflow:visible" width="120" height="100" viewBox="680 50 120 100">
  <path d="M700 78.400 L696.600 81.800 L700 85.200" stroke="#444" stroke-width="1.100" fill="none"/>
  <path d="M764.400 131.800 h5.400 l-2.700 3.400z" fill="#333"/>
  <!-- cube lines -->
  <g stroke="#dadcdd" stroke-width=".7" fill="none">
    <path d="M748 58.400 L729.400 83.400 L736.800 102.400 L760.200 116.600 L782.600 91 L771.400 71.200 Z"/>
    <path d="M748 58.400 L754.600 78.600 L736.800 102.400 M754.600 78.600 L782.600 91"/>
    <path d="M729.400 83.400 L757.600 97 L760.200 116.600 M757.600 97 L771.400 71.200" opacity=".7"/>
  </g>
  <!-- axes -->
  <path d="M782.600 91 L773.800 71.600" stroke="#2f8fd6" stroke-width="1.100"/>
  <path d="M782.600 91 L765.800 83.200" stroke="#e8604f" stroke-width=".8"/>
  <path d="M782.600 91 L762.400 116.400" stroke="#4aa32f" stroke-width="1.300"/>
  <g stroke-width=".35" text-anchor="middle">
  <text x="773.400" y="72.200" font-size="12" fill="#2f8fd6" stroke="#2f8fd6" transform="rotate(12 773 68)">Z</text>
  <text x="750" y="77.600" font-size="11.500" fill="#ee8f94" stroke="#ee8f94" transform="rotate(-14 750 74)">X</text>
  <text x="758" y="125.800" font-size="12" fill="#4aa32f" stroke="#4aa32f" transform="rotate(8 758 121)">Y</text>
  </g>
  <!-- chair -->
  <path d="M746 91.600 l1.900 -.9 l3.400 8.600 l-1.900 .9z M756.600 95.600 l2 -.6 l2.800 10.400 l-2 .6z M765 84 l1.700 -.7 l4.400 10 l-1.700 .7z M750.600 92 l1.400 -.5 l2 5.500 l-1.400 .5z" fill="#3e566c"/>
  <path d="M744.500 90.100 L755.100 79.500 L765.600 81.800 L757.200 94.300 Z" fill="#e8dadf" stroke="#c2b3ba" stroke-width=".4"/>
  <path d="M757.200 94.300 L765.600 81.800 L766.600 83.600 L758.200 96.300Z" fill="#5f7385"/>
  <path d="M744.500 90.100 L757.200 94.300 L758.200 96.300 L745 92.100Z" fill="#44586b"/>
  <path d="M753.600 77 L756.100 75.300 L766.700 80.600 L765.200 82.700 Z" fill="#4a6075"/>
  <!-- goblet -->
  <path d="M723.200 81.600 q3.800 -1.600 7.600 0 q.6 6.600 -3.200 7.800 q-4.800 -1.200 -4.400 -7.800z" fill="#c9cccf" stroke="#85898c" stroke-width=".5"/>
  <ellipse cx="727" cy="81.600" rx="3.800" ry="1.200" fill="#f1f2f3" stroke="#85898c" stroke-width=".4"/>
  <path d="M728 89.200 L730.800 94.300" stroke="#333" stroke-width="1.100"/>
  <ellipse cx="731.300" cy="94.900" rx="3.200" ry="1.300" transform="rotate(-12 731.300 94.900)" fill="#222"/>
</svg>


<!-- ===== BOTTOM ===== -->
<div id="btabs" class="abs" style="left:0;top:415px;width:800px;height:12px;">
  <div class="tb on" style="left:232px;width:32px;">Standard</div>
  <div class="tb" style="left:264px;width:39px;">Mechanism</div>
  <div class="tb" style="left:303px;width:59px;">Machine Elements</div>
  <div class="tb" style="left:362px;width:38px;">Simulation</div>
  <div class="tb" style="left:400px;width:26px;">Results</div>
  <div class="tb" style="left:426px;width:35px;">Assembly</div>
  <div class="tb" style="left:461px;width:23px;">Tools</div>
  <div class="tb" style="left:484px;width:31px;">Lifecycle</div>
  <div class="tb" style="left:515px;width:41px;">Marketplace</div>
  <div class="tb on" style="left:556px;width:23px;">View</div>
</div>
<div id="tbar" class="abs"></div>
<svg class="abs" style="left:0;top:410px" width="800" height="40" viewBox="0 410 800 40">
  <path d="M232.4 418.6 V415.4 H235.6 Z" fill="#2f87c8"/>
  <path d="M142 429.200 l1.600 1.600 l1.600 -1.600" stroke="#777" stroke-width=".6" fill="none"/>
  <g stroke="#d3d6d7" stroke-width=".8">
    <path d="M149.500 426 V450"/><path d="M252.5 430 V446"/><path d="M277.5 430 V446"/><path d="M298.7 430 V446"/><path d="M343.6 430 V446"/><path d="M366.5 430 V446"/><path d="M491 430 V446"/><path d="M553 430 V446"/><path d="M575.5 430 V446"/>
  </g>
  <!-- highlighted buttons -->
  <rect x="469.8" y="429.4" width="17" height="17" rx="1.5" fill="#cfe5f6" stroke="#6aa9dc" stroke-width=".8"/>
  <rect x="619.8" y="429.4" width="17" height="17" rx="1.5" fill="#cfe5f6" stroke="#6aa9dc" stroke-width=".8"/>
  <rect x="640" y="429.4" width="17" height="17" rx="1.5" fill="#cfe5f6" stroke="#6aa9dc" stroke-width=".8"/>
  <!-- 1,2 colourful gears -->
  <defs>
    <linearGradient id="rain" x1="0" y1="0" x2="1" y2="1"><stop offset="0" stop-color="#e2412c"/><stop offset=".3" stop-color="#f0a61c"/><stop offset=".5" stop-color="#f2d21e"/><stop offset=".75" stop-color="#6fbf3a"/><stop offset="1" stop-color="#3f9e3e"/></linearGradient>
  </defs>
  <g id="cgear" transform="translate(160.400 437.400)">
    <path d="M4.45 -1.18 L6.12 -1.02 L6.12 1.02 L4.45 1.18 L3.98 2.31 L5.04 3.60 L3.60 5.04 L2.31 3.98 L1.18 4.45 L1.02 6.12 L-1.02 6.12 L-1.18 4.45 L-2.31 3.98 L-3.60 5.04 L-5.04 3.60 L-3.98 2.31 L-4.45 1.18 L-6.12 1.02 L-6.12 -1.02 L-4.45 -1.18 L-3.98 -2.31 L-5.04 -3.60 L-3.60 -5.04 L-2.31 -3.98 L-1.18 -4.45 L-1.02 -6.12 L1.02 -6.12 L1.18 -4.45 L2.31 -3.98 L3.60 -5.04 L5.04 -3.60 L3.98 -2.31 Z" fill="url(#rain)" stroke="#8a6a20" stroke-width=".35"/>
    <circle r="2.500" fill="#f1f2f3" stroke="#8a6a20" stroke-width=".35"/>
    <path d="M4.800 6.800 h2.200 v-2.200z" fill="#333"/>
  </g>
  <use href="#cgear" x="20.300" y="0"/>
  <path d="M161.400 431.600 A5.400 5.400 0 0 1 165.800 437.800" stroke="#3c7fbd" stroke-width="2.200" fill="none"/>
  <path d="M163.400 437 l4.800 .4 l-2.800 3.400z" fill="#3c7fbd"/>
  <path d="M183.400 430.400 h4.600 v7.400 h-2 v-5.400 h-2.600z" fill="#555"/>
  <!-- 3 floppy -->
  <g>
    <path d="M194 430.800 h12 l1.600 1.600 v11.400 h-13.600z" fill="#3f7fb5" stroke="#2a5f90" stroke-width=".6"/>
    <rect x="196.600" y="431.200" width="8" height="5.400" fill="#a9c6de"/>
    <path d="M197.400 432.600 h6.400 M197.400 434.200 h6.400" stroke="#7fa6c6" stroke-width=".5"/>
    <rect x="196.400" y="438.800" width="8.600" height="5" fill="#27517c"/>
    <rect x="199.600" y="439.800" width="2.200" height="3.200" fill="#9fb9d0"/>
  </g>
  <!-- 4 database -->
  <g>
    <path d="M216 432.6 v9.6 a4.2 1.8 0 0 0 8.4 0 v-9.6" fill="#d9dcde" stroke="#555" stroke-width=".7"/>
    <ellipse cx="220.2" cy="432.6" rx="4.2" ry="1.8" fill="#eef0f1" stroke="#555" stroke-width=".7"/>
    <path d="M216 435.8 a4.2 1.8 0 0 0 8.4 0 M216 439 a4.2 1.8 0 0 0 8.4 0" fill="none" stroke="#555" stroke-width=".6"/>
    <path d="M222 441 h3.4 v-1.8 l3 2.8 l-3 2.8 v-1.8 h-3.4z" fill="#2f87c8" stroke="#fff" stroke-width=".3"/>
  </g>
  <!-- 5 rebuild arrows -->
  <g transform="translate(241.200 437.400)">
    <circle r="4.700" fill="none" stroke="#3f83bd" stroke-width="2.400" stroke-dasharray="4.400 2.983" transform="rotate(-62)"/>
    <g fill="#3f83bd">
      <path d="M2.200 -7.600 l3.600 3.600 l-4.600 1z"/>
      <path d="M2.200 -7.600 l3.600 3.600 l-4.600 1z" transform="rotate(90)"/>
      <path d="M2.200 -7.600 l3.600 3.600 l-4.600 1z" transform="rotate(180)"/>
      <path d="M2.200 -7.600 l3.600 3.600 l-4.600 1z" transform="rotate(270)"/>
    </g>
    <path d="M4.800 6.800 h2.200 v-2.200z" fill="#333"/>
  </g>
  <!-- 6 docs swap -->
  <g>
    <rect x="263.600" y="430.800" width="8" height="6.200" fill="#f4f4f4" stroke="#444" stroke-width=".7"/>
    <rect x="263.600" y="435.400" width="8" height="1.600" fill="#3f83bd"/>
    <rect x="258.400" y="437.800" width="8" height="6.200" fill="#f4f4f4" stroke="#444" stroke-width=".7"/>
    <rect x="258.400" y="442.400" width="8" height="1.600" fill="#3f83bd"/>
    <path d="M265 432.600 h5 M265 434 h5 M259.800 439.600 h5 M259.800 441 h5" stroke="#555" stroke-width=".6"/>
    <path d="M259.400 436 q0 -3 3 -3 M261.400 431.600 l1.600 1.400 l-1.600 1.400 M270.600 438.800 q0 3 -3 3 M268.600 443.200 l-1.600 -1.400 l1.600 -1.400" stroke="#333" stroke-width=".8" fill="none"/>
  </g>
  <!-- 7 gear outline -->
  <g transform="translate(288 437.400)">
    <path d="M4.41 -0.90 L5.85 -0.74 L5.85 0.74 L4.41 0.90 L4.10 1.86 L5.17 2.84 L4.30 4.04 L3.04 3.32 L2.22 3.92 L2.51 5.34 L1.11 5.80 L0.51 4.47 L-0.51 4.47 L-1.11 5.80 L-2.51 5.34 L-2.22 3.92 L-3.04 3.32 L-4.30 4.04 L-5.17 2.84 L-4.10 1.86 L-4.41 0.90 L-5.85 0.74 L-5.85 -0.74 L-4.41 -0.90 L-4.10 -1.86 L-5.17 -2.84 L-4.30 -4.04 L-3.04 -3.32 L-2.22 -3.92 L-2.51 -5.34 L-1.11 -5.80 L-0.51 -4.47 L0.51 -4.47 L1.11 -5.80 L2.51 -5.34 L2.22 -3.92 L3.04 -3.32 L4.30 -4.04 L5.17 -2.84 L4.10 -1.86 Z" fill="#f6f6f6" stroke="#777" stroke-width=".8"/>
    <circle r="2.300" fill="#f1f2f3" stroke="#777" stroke-width=".8"/>
    <path d="M4.800 6.800 h2.200 v-2.200z" fill="#333"/>
  </g>
  <!-- 8 undo, 9 redo -->
  <path d="M313.6 444 Q318.6 441 316.6 436.6 Q314.6 433.6 309.6 435.4" stroke="#2d78b6" stroke-width="2.2" fill="none"/>
  <path d="M306 434.6 l5.4 -3.4 l.6 6.4z" fill="#2d78b6"/>
  <path d="M330.4 444 Q325.4 441 327.4 436.6 Q329.4 433.6 334.4 435.4" stroke="#9cc3e2" stroke-width="2.2" fill="none"/>
  <path d="M338 434.6 l-5.4 -3.4 l-.6 6.4z" fill="#9cc3e2"/>
  <!-- 10 help -->
  <circle cx="355.4" cy="437" r="6" fill="#fbfbfb" stroke="#7e8386" stroke-width=".9"/>
  <text x="355.4" y="440.4" font-size="9.5" fill="#2d78b6" text-anchor="middle">?</text>
  <path d="M360 444.2 h2.2 v-2.2z" fill="#333"/>
  <!-- 11 rotate lock -->
  <path d="M383 433 A5.4 5.4 0 1 0 383.6 441" stroke="#2d6ea8" stroke-width="2.2" fill="none"/>
  <path d="M380.6 430 l5 1.6 l-3.6 3.6z" fill="#2d6ea8"/>
  <rect x="379.4" y="438.6" width="5.6" height="5" fill="#222"/>
  <path d="M380.6 438.6 v-1.6 a1.6 1.6 0 0 1 3.2 0 v1.6" stroke="#222" stroke-width=".9" fill="none"/>
  <!-- 12 zoom -->
  <g id="mag"><circle cx="399.6" cy="435" r="4" fill="#eef4f9" stroke="#555" stroke-width="1"/><path d="M396.800 438 L393 442.600" stroke="#3a7db8" stroke-width="2" stroke-linecap="round"/><circle cx="399.6" cy="435" r="1.6" fill="none" stroke="#2d78b6" stroke-width=".8"/></g>
  <!-- 13 pan -->
  <g transform="translate(418.4 437.4)" fill="#2d78b6">
    <path d="M-1 -4 h2 v3 h3 v2 h-3 v3 h-2 v-3 h-3 v-2 h3z"/>
    <path d="M0 -7.4 l2.8 3.4 h-5.6z M0 7.4 l2.8 -3.4 h-5.6z M-7.4 0 l3.4 -2.8 v5.6z M7.4 0 l-3.4 -2.8 v5.6z"/>
  </g>
  <!-- 14 rotate -->
  <g>
    <ellipse cx="438" cy="436.4" rx="5.6" ry="2.6" fill="none" stroke="#555" stroke-width=".9"/>
    <path d="M432.4 436 l1.4 -2.4 l1.4 2.2" fill="#555"/>
    <circle cx="439.4" cy="439.6" r="3.2" fill="#e4e6e8" stroke="#555" stroke-width=".8"/>
    <path d="M437.4 439.6 a2 2 0 0 1 4 0" stroke="#2d78b6" stroke-width=".8" fill="none"/>
  </g>
  <!-- 15 zoom area -->
  <g><circle cx="459.6" cy="435" r="4.2" fill="#f2f6fa" stroke="#555" stroke-width="1"/><path d="M456.600 438.200 L453 442.800" stroke="#3a7db8" stroke-width="2" stroke-linecap="round"/><path d="M451.6 431 v5.4 M450.2 432.4 l1.4 -1.6 l1.4 1.6" stroke="#2d78b6" stroke-width=".8" fill="none"/></g>
  <!-- 16 cube -->
  <g>
    <path d="M472.6 433.4 l6 -2.6 l6 2.6 v7.4 l-6 3.4 l-6 -3.4z" fill="#4c97d2" stroke="#1f5c91" stroke-width=".7" stroke-linejoin="round"/>
    <path d="M472.6 433.4 l6 2.8 l6 -2.8 l-6 -2.6z" fill="#9fcbee" stroke="#1f5c91" stroke-width=".6" stroke-linejoin="round"/>
    <path d="M478.6 436.2 v8" stroke="#1f5c91" stroke-width=".6"/>
    <path d="M484 445.4 h2.2 v-2.2z" fill="#333"/>
  </g>
  <!-- 17 eye -->
  <g>
    <path d="M495 436.4 Q501 430.2 507.4 436.4 Q501 442.6 495 436.4Z" fill="#fff" stroke="#333" stroke-width="1"/>
    <circle cx="501.2" cy="436.4" r="2.6" fill="#444"/>
    <path d="M500.4 438.6 h5.4 l-2 2.4 v3 l-1.4 -.8 v-2.2z" fill="#2d78b6" stroke="#fff" stroke-width=".3"/>
  </g>
  <!-- 18 cylinder blue -->
  <g>
    <path d="M517.4 432.4 v9.6 a4 1.7 0 0 0 8 0 v-9.6" fill="#3b86c4" stroke="#1f5c91" stroke-width=".6"/>
    <ellipse cx="521.4" cy="432.4" rx="4" ry="1.7" fill="#a9d0ee" stroke="#1f5c91" stroke-width=".6"/>
    <circle cx="525.4" cy="442.6" r="2.5" fill="#222"/><circle cx="525.4" cy="442.6" r=".9" fill="#fff"/>
  </g>
  <!-- 19 globe -->
  <g>
    <circle cx="541.8" cy="436.6" r="5.2" fill="#3b86c4" stroke="#1f5c91" stroke-width=".6"/>
    <path d="M538.4 433.6 q2 -1.6 3.6 0 q.6 2 -1.4 2.6 q-1.8 .4 -2.2 -2.6z M543 438 q2 -.6 2.6 1 q-.6 1.6 -2 1.6z" fill="#bfe0b6"/>
    <circle cx="545.8" cy="442.6" r="2.5" fill="#222"/><circle cx="545.8" cy="442.6" r=".9" fill="#fff"/>
  </g>
  <!-- 20 sphere link -->
  <g>
    <circle cx="566.400" cy="435" r="4.800" fill="#b9bcbe" stroke="#707070" stroke-width=".8"/>
    <circle cx="565" cy="433.600" r="2" fill="#e6e8e9" opacity=".9"/>
    <path d="M563.4 439.2 L560.6 442.4" stroke="#333" stroke-width="1"/>
    <rect x="558.4" y="441.4" width="3.4" height="3.4" fill="#444"/>
  </g>
  <!-- 21 section -->
  <g>
    <path d="M581 434 l4 -2.2 v10.4 l-4 2.2z" fill="#2d6ea8" stroke="#1b4d7c" stroke-width=".5"/>
    <path d="M585 431.8 q4 -1 6 1.4 v10 q-2 -2.2 -6 -1z" fill="#c9ccce" stroke="#555" stroke-width=".6"/>
    <path d="M591 433.2 l2.4 -1 v10 l-2.400 1z" fill="#2d6ea8" stroke="#1b4d7c" stroke-width=".5"/>
    <path d="M592.6 445 h2.2 v-2.2z" fill="#333"/>
  </g>
  <!-- 22 window hand -->
  <g>
    <rect x="601.6" y="431.4" width="10" height="8.4" fill="#fafafa" stroke="#444" stroke-width=".8"/>
    <path d="M603 433.4 h3 M603 435.4 h2" stroke="#2d78b6" stroke-width=".8"/>
    <path d="M606.6 444.6 v-3 l-1.400 -2 l1 -.6 l1.200 1.200 v-4 h1.200 v3 h3.400 v5.400z" fill="#fff" stroke="#333" stroke-width=".7"/>
  </g>
  <!-- 23 -->
  <g>
    <rect x="622.4" y="432" width="11.8" height="10.8" fill="#eaf2f9" stroke="#2d6ea8" stroke-width="1"/>
    <rect x="624" y="434" width="5.6" height="6.8" fill="#fff" stroke="#555" stroke-width=".6"/>
    <circle cx="628" cy="437.400" r="2.2" fill="#cfd4d8" stroke="#555" stroke-width=".5"/>
    <path d="M630.6 437.4 l2.4 -1.800 v3.600z" fill="#2d6ea8"/>
  </g>
  <!-- 24 ruler pen -->
  <g>
    <rect x="643.4" y="431.4" width="4.6" height="13" fill="#2d78b6" stroke="#1b4d7c" stroke-width=".5"/>
    <path d="M643.4 434 h2 M643.4 436.4 h2.600 M643.4 438.800 h2 M643.4 441.200 h2.600" stroke="#fff" stroke-width=".6"/>
    <path d="M654.6 431.6 l-4.2 5.400 l-.6 2 l1.800 -1 l4.200 -5.400z" fill="#222"/>
  </g>
</svg>

</body>
</html>
